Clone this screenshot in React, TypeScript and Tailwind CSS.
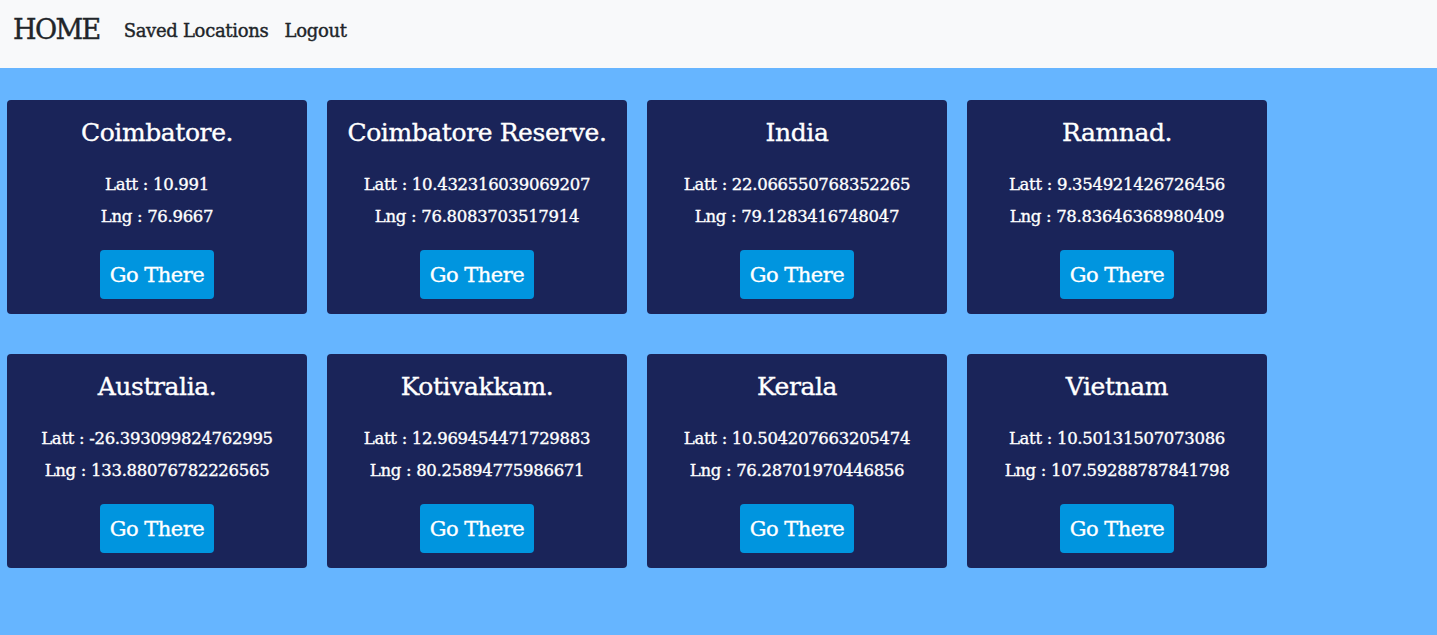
import React from 'react';

type Place = { name: string; lat: string; lng: string };

const places: Place[] = [
  { name: 'Coimbatore.', lat: '10.991', lng: '76.9667' },
  { name: 'Coimbatore Reserve.', lat: '10.432316039069207', lng: '76.8083703517914' },
  { name: 'India', lat: '22.066550768352265', lng: '79.1283416748047' },
  { name: 'Ramnad.', lat: '9.354921426726456', lng: '78.83646368980409' },
  { name: 'Australia.', lat: '-26.393099824762995', lng: '133.88076782226565' },
  { name: 'Kotivakkam.', lat: '12.969454471729883', lng: '80.25894775986671' },
  { name: 'Kerala', lat: '10.504207663205474', lng: '76.28701970446856' },
  { name: 'Vietnam', lat: '10.50131507073086', lng: '107.59288787841798' },
];

const font = "font-['DejaVu_Serif',serif]";

function PlaceCard({ place }: { place: Place }) {
  return (
    <div className="flex h-[214px] w-[300px] flex-col items-center rounded-[4px] bg-[#1a2459] pt-[17px] text-white [-webkit-text-stroke:0.35px_white]">
      <h3 className="h-[32px] text-[25px] leading-[32px] tracking-[-0.4px]">{place.name}</h3>
      <p className="mt-[20px] text-[16.5px] leading-[32px] tracking-[-0.3px]">Latt : {place.lat}</p>
      <p className="text-[16.5px] leading-[32px] tracking-[-0.3px]">Lng : {place.lng}</p>
      <button
        type="button"
        className="mt-[17px] h-[49px] w-[114px] rounded-[4px] bg-[#0095df] pt-[2px] text-[21px] tracking-[-0.5px] text-white"
      >
        Go There
      </button>
    </div>
  );
}

export default function App() {
  return (
    <div className={`min-h-[635px] bg-[#66b5ff] ${font}`}>
      <nav className="flex h-[68px] items-center bg-[#f8f9fa] px-[13px] pb-[8px] text-[#212529] [-webkit-text-stroke:0.4px_#212529]">
        <span className="text-[27px] tracking-[-1.6px]">HOME</span>
        <span className="ml-[24px] text-[18px] tracking-[-0.3px]">Saved Locations</span>
        <span className="ml-[16px] text-[18px] tracking-[-0.3px]">Logout</span>
      </nav>
      <div className="grid grid-cols-[repeat(4,300px)] gap-x-[20px] gap-y-[40px] px-[7px] pt-[32px]">
        {places.map((p) => (
          <PlaceCard key={p.name} place={p} />
        ))}
      </div>
    </div>
  );
}
